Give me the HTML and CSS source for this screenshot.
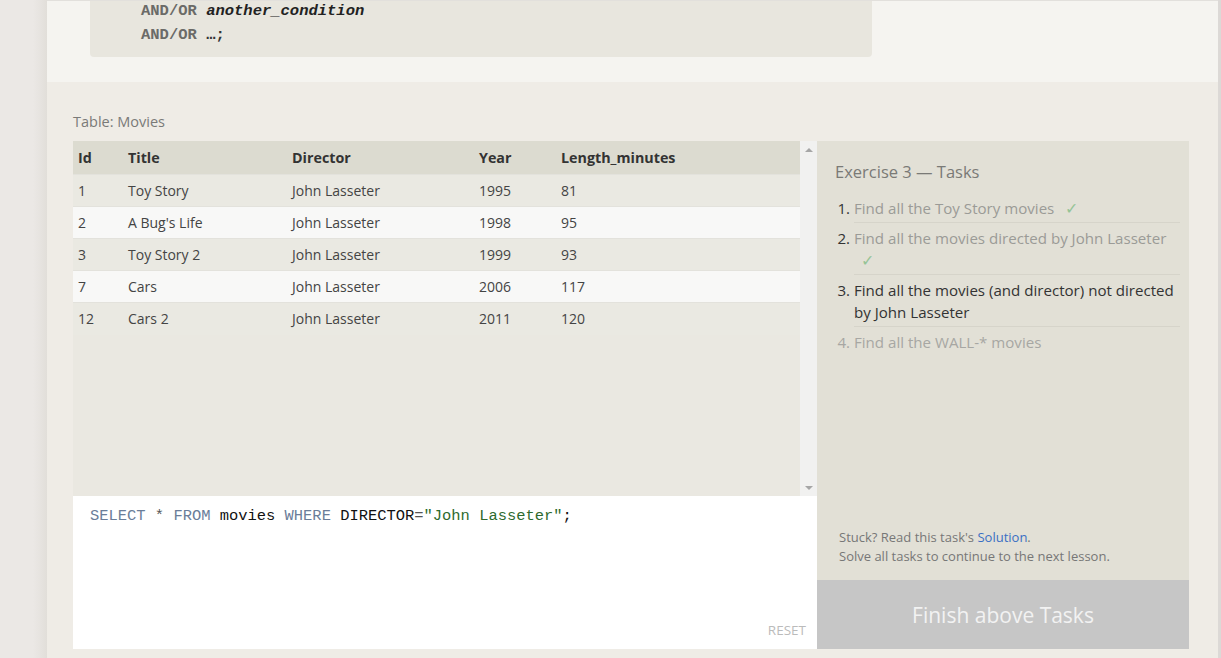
FILE: index.html
```html
<!DOCTYPE html>
<html>
<head>
<meta charset="utf-8">
<link rel="stylesheet" href="styles.css">
</head>
<body>
<div class="page">
  <div class="gutter"></div>
  <div class="main">
    <div class="top">
      <div class="syntax">
        <div class="syn-line"><span class="kw">AND/OR</span> <span class="var">another_condition</span></div>
        <div class="syn-line"><span class="kw">AND/OR</span> <span class="var2">…;</span></div>
      </div>
    </div>
    <div class="lower">
      <div class="table-label">Table: Movies</div>
      <div class="workspace">
        <div class="left-col">
          <div class="table-area">
            <div class="table-wrap">
              <table class="movies">
                <thead>
                  <tr><th class="c-id">Id</th><th class="c-title">Title</th><th class="c-dir">Director</th><th class="c-year">Year</th><th>Length_minutes</th></tr>
                </thead>
                <tbody>
                  <tr><td>1</td><td>Toy Story</td><td>John Lasseter</td><td>1995</td><td>81</td></tr>
                  <tr><td>2</td><td>A Bug's Life</td><td>John Lasseter</td><td>1998</td><td>95</td></tr>
                  <tr><td>3</td><td>Toy Story 2</td><td>John Lasseter</td><td>1999</td><td>93</td></tr>
                  <tr><td>7</td><td>Cars</td><td>John Lasseter</td><td>2006</td><td>117</td></tr>
                  <tr><td>12</td><td>Cars 2</td><td>John Lasseter</td><td>2011</td><td>120</td></tr>
                </tbody>
              </table>
            </div>
            <div class="scrollbar">
              <span class="arrow up"></span>
              <span class="arrow down"></span>
            </div>
          </div>
          <div class="editor">
            <div class="code"><span class="sk">SELECT</span> <span class="op">*</span> <span class="sk">FROM</span> <span class="id">movies</span> <span class="sk">WHERE</span> <span class="id">DIRECTOR</span><span class="op">=</span><span class="str">"John Lasseter"</span><span class="id">;</span></div>
            <div class="reset">RESET</div>
          </div>
        </div>
        <div class="right-col">
          <div class="tasks">
            <div class="tasks-title">Exercise 3 — Tasks</div>
            <ol class="task-list">
              <li class="done">Find all the Toy Story movies <span class="check">✓</span></li>
              <li class="done">Find all the movies directed by John Lasseter <span class="check">✓</span></li>
              <li class="active">Find all the movies (and director) not directed by John Lasseter</li>
              <li class="todo">Find all the WALL-* movies</li>
            </ol>
            <div class="hint">
              <p>Stuck? Read this task's <a href="#">Solution</a>.</p>
              <p>Solve all tasks to continue to the next lesson.</p>
            </div>
          </div>
          <div class="finish">Finish above Tasks</div>
        </div>
      </div>
    </div>
  </div>
  <div class="edge"></div>
</div>
</body>
</html>
```
FILE: styles.css
```css
html, body {
  margin: 0;
  padding: 0;
  height: 100%;
  overflow: hidden;
}
body {
  font-family: "Open Sans", "Noto Sans", sans-serif;
  background: #efece6;
}
.page {
  display: flex;
  height: 658px;
}
.gutter {
  width: 47px;
  flex: none;
  background: linear-gradient(to right, #ebe8e5 0, #ebe8e5 33px, #e6e3df 41px, #e1ded9 47px);
}
.edge {
  width: 3px;
  flex: none;
  background: #dcd9d6;
}
.main {
  flex: 1;
  display: flex;
  flex-direction: column;
  background: #efece6;
}
.top {
  height: 82px;
  flex: none;
  background: #f5f4f0;
  border-top: 1px solid #e2e0dc;
  box-sizing: border-box;
  padding-left: 43px;
  overflow: hidden;
}
.syntax {
  width: 782px;
  height: 58px;
  background: #e8e6de;
  border-radius: 0 0 4px 4px;
  box-sizing: border-box;
  padding-left: 51px;
  font-family: "Liberation Mono", "DejaVu Sans Mono", monospace;
  font-size: 15.5px;
  font-weight: bold;
  line-height: 24px;
  margin-top: -2px;
}
.kw { color: #6b6b68; }
.var { color: #222; font-style: italic; }
.var2 { color: #333; }
.lower {
  flex: 1;
  padding: 30px 0 0 26px;
}
.table-label {
  font-size: 14.5px;
  color: #7a7a78;
  line-height: 20px;
  height: 29px;
}
.workspace {
  display: flex;
  width: 1116px;
  height: 508px;
}
.left-col {
  width: 744px;
  display: flex;
  flex-direction: column;
}
.table-area {
  height: 355px;
  display: flex;
  background: #eae8e1;
}
.table-wrap {
  flex: 1;
}
.scrollbar {
  width: 17px;
  flex: none;
  background: #f1f1f0;
  display: flex;
  flex-direction: column;
  justify-content: space-between;
  align-items: center;
  padding: 7px 0 6px;
  box-sizing: border-box;
}
.arrow {
  width: 0;
  height: 0;
  border-left: 4px solid transparent;
  border-right: 4px solid transparent;
}
.arrow.up { border-bottom: 4px solid #a6a6a6; }
.arrow.down { border-top: 4px solid #a6a6a6; }
.movies {
  width: 100%;
  border-collapse: collapse;
  font-size: 14px;
  color: #444;
}
.movies th {
  background: #dcdbd0;
  text-align: left;
  font-weight: bold;
  font-size: 14.3px;
  color: #333;
  height: 33px;
  padding: 0 0 0 5px;
}
.movies td {
  height: 32px;
  padding: 0 0 0 5px;
  border-top: 1px solid #e3e2dc;
  box-sizing: border-box;
}
.movies tbody tr:nth-child(odd) { background: #eae9e2; }
.movies tbody tr:nth-child(even) { background: #f8f8f7; }
.c-id { width: 45px; }
.c-title { width: 159px; }
.c-dir { width: 182px; }
.c-year { width: 77px; }
.editor {
  flex: 1;
  background: #fff;
  display: flex;
  flex-direction: column;
  justify-content: space-between;
  padding: 11px 11px 10px 17px;
}
.code {
  font-family: "Liberation Mono", "DejaVu Sans Mono", monospace;
  font-size: 15.45px;
  line-height: 19px;
  color: #222;
}
.sk { color: #6a7d99; }
.op { color: #555; }
.id { color: #111; }
.str { color: #2e6a2e; }
.reset {
  align-self: flex-end;
  font-size: 13.5px;
  color: #bbb;
}
.right-col {
  width: 372px;
  display: flex;
  flex-direction: column;
}
.tasks {
  flex: 1;
  background: #e2e0d6;
  padding: 20px 9px 14px 18px;
  display: flex;
  flex-direction: column;
}
.tasks-title {
  font-size: 16.5px;
  color: #7a7a76;
  line-height: 22px;
  margin-bottom: 11px;
}
.task-list {
  margin: 0;
  padding: 0 0 0 19px;
  font-size: 15.1px;
  line-height: 22px;
}
.task-list li {
  padding: 3px 0 3px;
  border-bottom: 1px solid #d6d4ca;
}
.task-list li + li { padding-top: 4px; }
.task-list li:last-child { border-bottom: none; }
.task-list li::marker { color: #333; }
.task-list li.done { color: #9b9b97; }
.task-list li.active { color: #333; }
.task-list li.todo { color: #a7a7a3; }
.task-list li.todo::marker { color: #a7a7a3; }
.check {
  color: #96c496;
  font-size: 16px;
  margin-left: 7px;
}
.hint {
  margin-top: auto;
  font-size: 13px;
  color: #777;
  line-height: 19px;
  padding-left: 4px;
}
.hint p { margin: 0; }
.hint a {
  color: #3a6fc4;
  text-decoration: none;
}
.finish {
  height: 69px;
  flex: none;
  background: #c6c6c6;
  color: #f2f2f2;
  font-size: 21px;
  display: flex;
  align-items: center;
  justify-content: center;
  padding-top: 1px;
  box-sizing: border-box;
}
```
